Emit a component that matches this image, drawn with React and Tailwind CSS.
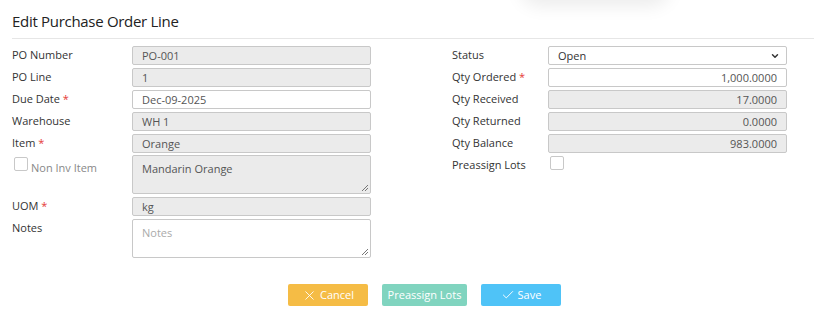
import { ChevronDown, Check, X } from 'lucide-react';

const leftRows = [
  { label: 'PO Number', value: 'PO-001', disabled: true },
  { label: 'PO Line', value: '1', disabled: true },
  { label: 'Due Date', value: 'Dec-09-2025', required: true },
  { label: 'Warehouse', value: 'WH 1', disabled: true },
  { label: 'Item', value: 'Orange', disabled: true, required: true },
];

const rightRows = [
  { label: 'Qty Ordered', value: '1,000.0000', required: true },
  { label: 'Qty Received', value: '17.0000', disabled: true },
  { label: 'Qty Returned', value: '0.0000', disabled: true },
  { label: 'Qty Balance', value: '983.0000', disabled: true },
];

function Label({ text, required, w }) {
  return (
    <div className={`${w} shrink-0 pt-[1px] text-[11px] leading-[16px] text-[#333]`}>
      {text}
      {required && <span className="text-[#e53935]"> *</span>}
    </div>
  );
}

function Field({ value, disabled, right }) {
  return (
    <div
      className={`w-[239px] h-[19px] border rounded-[2px] px-[9px] text-[11px] leading-[18px] text-[#555] border-[#c8c8c8] ${
        disabled ? 'bg-[#ebebeb]' : 'bg-white'
      } ${right ? 'text-right' : ''}`}
    >
      {value}
    </div>
  );
}

function Grip() {
  return (
    <svg className="absolute right-[1px] bottom-[1px]" width="8" height="8" viewBox="0 0 8 8">
      <path d="M7 1 L1 7 M7 4 L4 7" stroke="#777" strokeWidth="1" />
    </svg>
  );
}

function Area({ value, placeholder, disabled }) {
  return (
    <div
      className={`relative w-[239px] h-[39px] border rounded-[2px] px-[9px] pt-[5px] text-[11px] leading-[16px] border-[#c8c8c8] ${
        disabled ? 'bg-[#ebebeb] text-[#555]' : 'bg-white text-[#aaa]'
      }`}
    >
      {value || placeholder}
      <Grip />
    </div>
  );
}

export default function App() {
  return (
    <div
      className="relative w-[814px] h-[328px] bg-white overflow-hidden"
      style={{ fontFamily: '"Open Sans", "Noto Sans", sans-serif' }}
    >
      <div className="absolute left-[520px] top-[-40px] w-[150px] h-[40px] rounded-full shadow-[0_6px_18px_rgba(0,0,0,0.08)]" />

      <div className="pl-[12px] pt-[11px]">
        <h2 className="text-[15px] leading-[20px] tracking-[-0.3px] text-[#222] pb-[7px] border-b border-[#e6e6e6]">
          Edit Purchase Order Line
        </h2>

        <div className="flex pt-[7px]">
          <div className="w-[440px] flex flex-col gap-[3px]">
            {leftRows.map((r) => (
              <div key={r.label} className="flex">
                <Label text={r.label} required={r.required} w="w-[120px]" />
                <Field value={r.value} disabled={r.disabled} />
              </div>
            ))}
            <div className="flex -mt-[1px]">
              <div className="w-[120px] shrink-0 flex items-start pt-[2px]">
                <div className="w-[14px] h-[14px] border border-[#c8c8c8] rounded-[2px] bg-white ml-[2px]" />
                <span className="text-[11px] leading-[16px] text-[#888] ml-[3px] mt-[3px]">Non Inv Item</span>
              </div>
              <Area value="Mandarin Orange" disabled />
            </div>
            <div className="flex">
              <Label text="UOM" required w="w-[120px]" />
              <Field value="kg" disabled />
            </div>
            <div className="flex">
              <Label text="Notes" w="w-[120px]" />
              <Area placeholder="Notes" />
            </div>
          </div>

          <div className="flex flex-col gap-[3px]">
            <div className="flex">
              <Label text="Status" w="w-[96px]" />
              <div className="relative w-[239px] h-[19px] border border-[#c8c8c8] rounded-[2px] bg-white px-[9px] text-[11px] leading-[18px] text-[#333]">
                Open
                <ChevronDown className="absolute right-[6px] top-[4px]" size={10} strokeWidth={3.5} color="#333" />
              </div>
            </div>
            {rightRows.map((r) => (
              <div key={r.label} className="flex">
                <Label text={r.label} required={r.required} w="w-[96px]" />
                <Field value={r.value} disabled={r.disabled} right />
              </div>
            ))}
            <div className="flex">
              <Label text="Preassign Lots" w="w-[96px]" />
              <div className="w-[14px] h-[14px] border border-[#c8c8c8] rounded-[2px] bg-white ml-[2px]" />
            </div>
          </div>
        </div>

        <div className="flex gap-[14px] pl-[276px] pt-[26px]">
          <button className="w-[80px] h-[22px] rounded-[2px] bg-[#f5bc45] text-white text-[11px] flex items-center justify-center gap-[3px]">
            <X size={15} strokeWidth={1.4} />
            Cancel
          </button>
          <button className="w-[85px] h-[22px] rounded-[2px] bg-[#80d4bf] text-white text-[11px] flex items-center justify-center">
            Preassign Lots
          </button>
          <button className="w-[80px] h-[22px] rounded-[2px] bg-[#4fc3f7] text-white text-[11px] flex items-center justify-center gap-[3px]">
            <Check size={14} strokeWidth={1.6} />
            Save
          </button>
        </div>
      </div>
    </div>
  );
}
